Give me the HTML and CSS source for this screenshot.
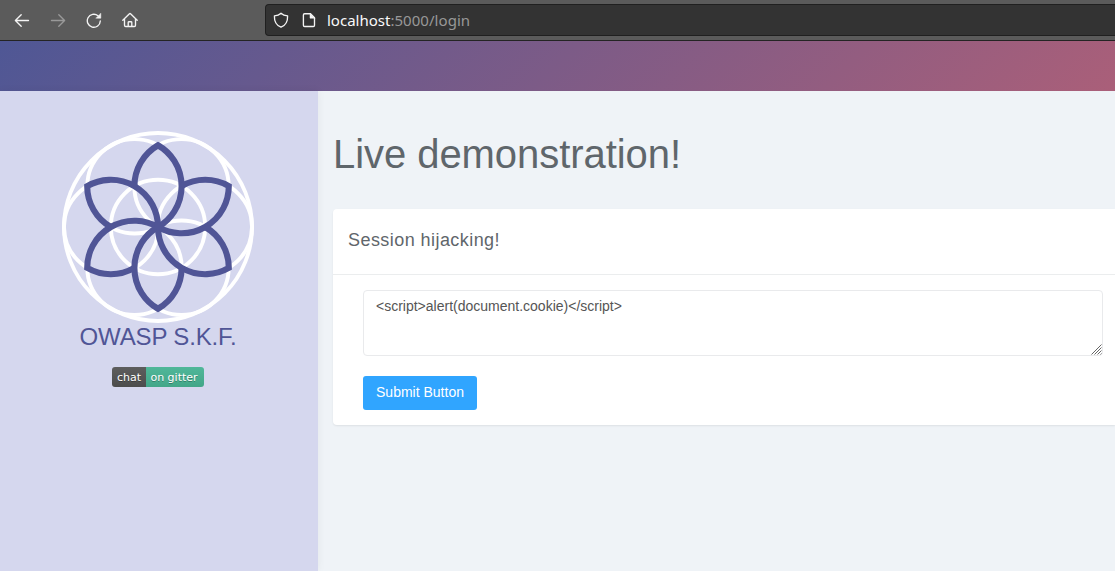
FILE: index.html
```html
<!DOCTYPE html>
<html lang="en">
<head>
<meta charset="utf-8">
<title>Live demonstration</title>
<link rel="stylesheet" href="styles.css">
</head>
<body>
<div class="toolbar">
  <div class="nav">
    <svg class="icon" viewBox="0 0 16 16"><path d="M14.500 8.500H1.500M7.200 2.700l-5.800 5.800 5.800 5.800"/></svg>
    <svg class="icon disabled" viewBox="0 0 16 16"><path d="M1.500 8.500h13M8.800 2.700l5.800 5.800-5.800 5.800"/></svg>
    <svg class="icon" viewBox="0 0 16 16"><path d="M14.300 9A6.500 6.500 0 1 1 12 3.800"/><path class="solid" d="M14.800 1.500v4.700h-4.700z"/></svg>
    <svg class="icon home-icon" viewBox="0 0 16 16"><path d="M.8 8.200 7.200 1.900q.8-.7 1.600 0l6.400 6.300M2.500 7v6.300q0 1.200 1.200 1.200h8.600q1.200 0 1.200-1.200V7M6.200 14.500v-4q0-.8.8-.8h2q.8 0 .8.8v4"/></svg>
  </div>
  <div class="urlbar">
    <svg class="icon" viewBox="0 0 16 16"><path d="M8 1.200C6 3 3.800 3.600 1.400 3.900 1.200 9 3.500 13.500 8 15.200c4.500-1.700 6.800-6.200 6.600-11.300C12.200 3.600 10 3 8 1.200z"/></svg>
    <svg class="icon page-icon" viewBox="0 0 16 16"><path d="M3.600 1.700h5.900l4 4v7.600q0 1.200-1.200 1.200H3.600q-1.200 0-1.200-1.200V2.900q0-1.200 1.200-1.200z"/><path class="solid" d="M9 1.500v4.700h4.700z"/></svg>
    <div class="url"><span class="host">localhost</span><span class="rest">:5000/login</span></div>
  </div>
</div>
<div class="banner"></div>
<div class="layout">
  <aside class="sidebar">
    <svg class="logo" viewBox="-96 -96 192 192">
      <defs>
        <path id="petal" d="M-23.600-40.880A47.200 47.200 0 0 1 0-81.750 47.200 47.200 0 0 1 0 0"/>
      </defs>
      <g class="rings">
        <circle r="94"/>
        <circle r="47.200"/>
        <circle cx="46.800" r="47.200"/>
        <circle cx="-46.800" r="47.200"/>
        <circle cx="23.500" cy="-40.700" r="47.200"/>
        <circle cx="-23.500" cy="-40.700" r="47.200"/>
        <circle cx="23.500" cy="40.700" r="47.200"/>
        <circle cx="-23.500" cy="40.700" r="47.200"/>
      </g>
      <g class="petals">
        <use href="#petal"/>
        <use href="#petal" transform="rotate(60)"/>
        <use href="#petal" transform="rotate(120)"/>
        <use href="#petal" transform="rotate(180)"/>
        <use href="#petal" transform="rotate(240)"/>
        <use href="#petal" transform="rotate(300)"/>
      </g>
    </svg>
    <div class="brand">OWASP S.K.F.</div>
    <div class="badge"><span class="badge-left">chat</span><span class="badge-right">on gitter</span></div>
  </aside>
  <main class="content">
    <h1 class="title">Live demonstration!</h1>
    <section class="card">
      <h2 class="card-header">Session hijacking!</h2>
      <form class="card-body">
        <div class="field-wrap">
          <textarea class="field" spellcheck="false">&lt;script&gt;alert(document.cookie)&lt;/script&gt;</textarea>
          <svg class="grip" viewBox="0 0 11 11"><path d="M.5 10.500l10-10M3.500 10.500l7-7M6.500 10.500l4-4M9.500 10.500l1-1"/></svg>
        </div>
        <button class="submit" type="button">Submit Button</button>
      </form>
    </section>
  </main>
</div>
</body>
</html>
```
FILE: styles.css
```css
* { box-sizing: border-box; }
body {
  margin: 0;
  height: 571px;
  overflow: hidden;
  display: flex;
  flex-direction: column;
  background: #eff3f7;
  color: #5f666b;
  font-family: "Liberation Sans", Arial, sans-serif;
}
.toolbar {
  flex: none;
  display: flex;
  height: 41px;
  background: #5b5b5b;
  border-bottom: 1px solid #242424;
}
.nav {
  display: flex;
  align-items: center;
  gap: 20px;
  width: 265px;
  padding-left: 14px;
}
.icon {
  flex: none;
  width: 16px;
  height: 16px;
  fill: none;
  stroke: #f4f4f4;
  stroke-width: 1.35;
  stroke-linecap: round;
  stroke-linejoin: round;
}
.icon .solid { fill: #f4f4f4; stroke-width: .5; }
.home-icon { margin-left: -.5px; }
.icon.disabled { stroke: #999; }
.urlbar {
  flex: 1;
  display: flex;
  align-items: center;
  height: 32px;
  margin-top: 4px;
  padding-left: 7px;
  background: #333;
  border: 1px solid #202020;
  border-right: 0;
  border-radius: 4px 0 0 4px;
}
.page-icon { margin-left: 12px; }
.url {
  margin-left: 10px;
  font: 15px/20px "Noto Sans", sans-serif;
  white-space: nowrap;
}
.host { color: #f9f9fa; }
.rest { color: #989898; letter-spacing: .05px; }
.banner {
  flex: none;
  height: 50px;
  background: linear-gradient(135deg, #4f5795, #aa5f79);
}
.layout { flex: 1; display: flex; }
.sidebar {
  flex: none;
  display: flex;
  flex-direction: column;
  align-items: center;
  width: 318px;
  padding: 40px 2px 0 0;
  background: #d5d7ee;
  box-shadow: 0 0 8px rgba(0, 0, 0, .06);
}
.logo { flex: none; width: 192px; height: 192px; }
.rings { fill: none; stroke: #fff; stroke-width: 3.9; }
.petals { fill: none; stroke: #505596; stroke-width: 6.1; }
.brand {
  color: #505596;
  font-size: 24px;
  line-height: 28px;
  letter-spacing: -.15px;
  white-space: nowrap;
}
.badge {
  display: flex;
  width: 92px;
  height: 20px;
  margin-top: 16px;
  overflow: hidden;
  border-radius: 3px;
  color: #fff;
  font: 11px/21px "DejaVu Sans", sans-serif;
  text-align: center;
  text-shadow: 0 1px rgba(1, 1, 1, .3);
}
.badge-left { width: 34px; background: linear-gradient(#5d5d5d, #4c4c4c); }
.badge-right { width: 58px; padding-right: 2px; background: linear-gradient(#50b799, #42a688); }
.content { flex: 1; min-width: 0; padding: 38px 0 0 15px; }
.title {
  margin: 0;
  font-size: 40px;
  font-weight: 400;
  line-height: 50px;
  letter-spacing: -.06px;
  white-space: nowrap;
}
.card {
  height: 216px;
  margin-top: 30px;
  background: #fff;
  border-radius: 4px 0 0 4px;
  box-shadow: 0 1px 2px rgba(0, 0, 0, .08);
}
.card-header {
  height: 66px;
  margin: 0;
  padding: 20px 15px 0;
  border-bottom: 1px solid #ebedee;
  font-size: 18px;
  font-weight: 400;
  line-height: 22px;
  letter-spacing: .44px;
}
.card-body { padding: 15px 12px 0 30px; }
.field-wrap { position: relative; }
.field {
  display: block;
  width: 100%;
  height: 66px;
  padding: 5px 12px 7px;
  border: 1px solid #e9eaec;
  border-radius: 4px;
  background: #fff;
  color: #555;
  font: 14px/20px "Liberation Sans", Arial, sans-serif;
  resize: none;
}
/* Drag handle in the corner of the text area */
.grip {
  position: absolute;
  right: 1px;
  bottom: 1px;
  width: 11px;
  height: 11px;
  fill: none;
  stroke: #666;
  stroke-width: 1;
}
.submit {
  display: block;
  width: 114px;
  height: 34px;
  margin-top: 20px;
  padding: 0 0 2px;
  border: 0;
  border-radius: 3px;
  background: #30a5ff;
  color: #fff;
  font: 14px/20px "Liberation Sans", Arial, sans-serif;
}
```
